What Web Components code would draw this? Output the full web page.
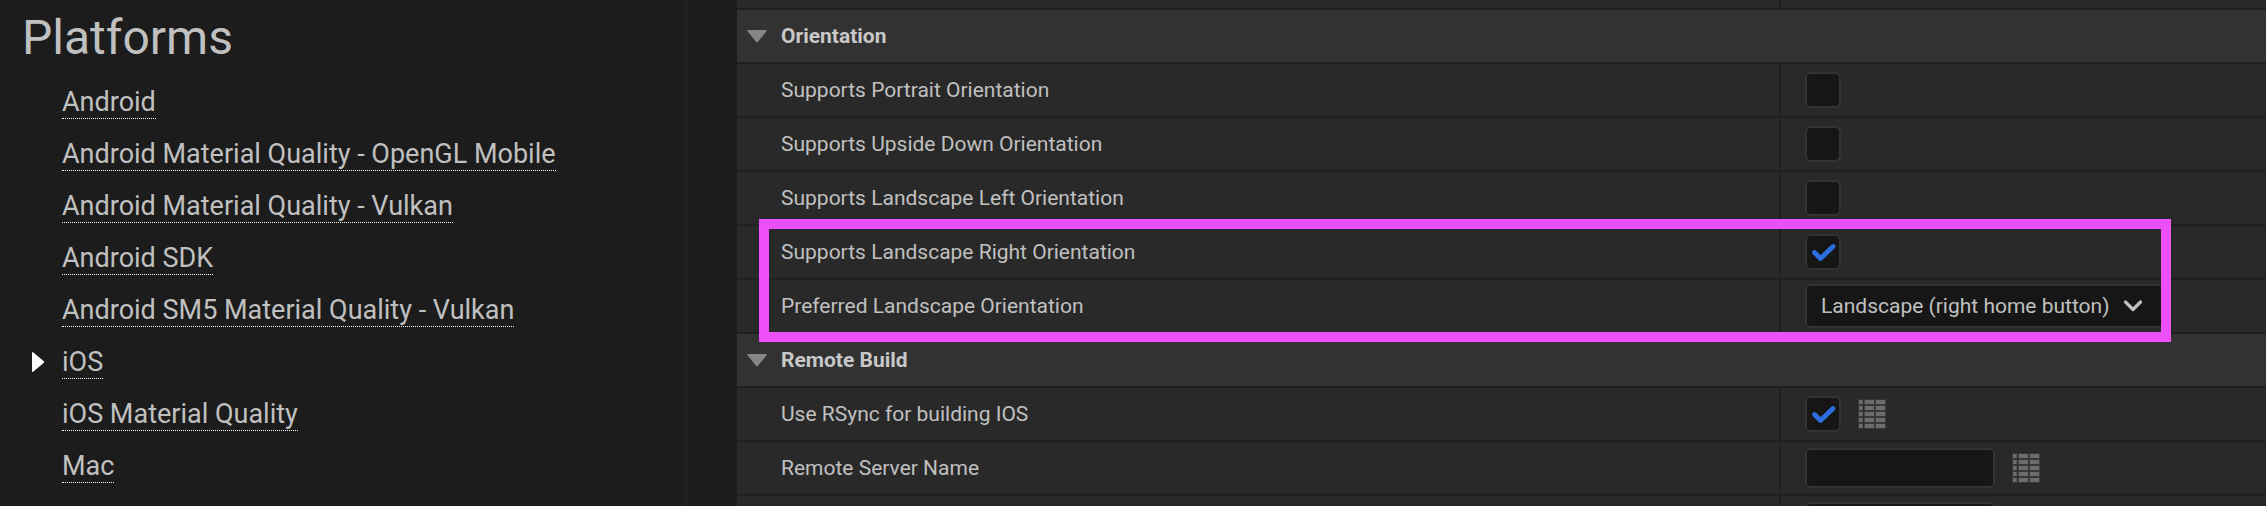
<!DOCTYPE html>
<html lang="en">
<head>
  <meta charset="UTF-8">
  <meta name="viewport" content="width=device-width, initial-scale=1.0">
  <title>Project Settings - iOS</title>
  <style>
    body {
      margin: 0;
      background: #1c1c1c;
      color: #c0c0c0;
      font-family: Roboto, "Liberation Sans", sans-serif;
    }
  </style>
</head>
<body>
  <settings-page>
    <platform-nav slot="nav" heading="Platforms">
      <platform-link>Android</platform-link>
      <platform-link>Android Material Quality - OpenGL Mobile</platform-link>
      <platform-link>Android Material Quality - Vulkan</platform-link>
      <platform-link>Android SDK</platform-link>
      <platform-link>Android SM5 Material Quality - Vulkan</platform-link>
      <platform-link current>iOS</platform-link>
      <platform-link>iOS Material Quality</platform-link>
      <platform-link>Mac</platform-link>
    </platform-nav>

    <setting-row type="stub"></setting-row>
    <setting-group>
      <span slot="title">Orientation</span>
      <setting-row type="check">Supports Portrait Orientation</setting-row>
      <setting-row type="check">Supports Upside Down Orientation</setting-row>
      <setting-row type="check">Supports Landscape Left Orientation</setting-row>
      <highlight-frame>
        <setting-row type="check" checked>Supports Landscape Right Orientation</setting-row>
        <setting-row type="select" value="Landscape (right home button)">Preferred Landscape Orientation</setting-row>
      </highlight-frame>
    </setting-group>
    <setting-group>
      <span slot="title">Remote Build</span>
      <setting-row type="check" checked config>Use RSync for building IOS</setting-row>
      <setting-row type="text" config>Remote Server Name</setting-row>
      <setting-row type="text"></setting-row>
    </setting-group>
  </settings-page>

  <script>
    // Two panes: navigation on the left, settings on the right
    class SettingsPage extends HTMLElement {
      constructor() {
        super();
        this.attachShadow({ mode: 'open' }).innerHTML = `
          <style>
            :host {
              display: flex;
              height: 100vh;
              overflow: hidden;
            }
            aside {
              flex: 0 0 683px;
              border-right: 6px solid #202020;
            }
            main {
              flex: 1;
              min-width: 0;
              margin-left: 48px;
            }
          </style>
          <aside><slot name="nav"></slot></aside>
          <main><slot></slot></main>
        `;
      }
    }

    class PlatformNav extends HTMLElement {
      constructor() {
        super();
        this.attachShadow({ mode: 'open' }).innerHTML = `
          <style>
            :host {
              display: block;
              padding: 8px 22px;
            }
            h1 {
              margin: 0 0 8px;
              font-size: 48px;
              line-height: 60px;
              font-weight: 400;
            }
            nav {
              display: flex;
              flex-direction: column;
            }
          </style>
          <h1>${this.getAttribute('heading')}</h1>
          <nav><slot></slot></nav>
        `;
      }
    }

    class PlatformLink extends HTMLElement {
      constructor() {
        super();
        const arrow = '<svg width="14" height="22" viewBox="0 0 14 22"><path d="M1 2.2Q1 .2 2.4 1.5L12.6 10Q13.6 11 12.6 12L2.4 20.5Q1 21.800 1 19.800Z" fill="#fff"/></svg>';
        this.attachShadow({ mode: 'open' }).innerHTML = `
          <style>
            :host {
              display: grid;
              grid-template-columns: 14px 1fr;
              column-gap: 17px;
              padding-left: 9px;
              height: 52px;
              align-items: center;
              justify-items: start;
            }
            a {
              grid-column: 2;
              grid-row: 1;
              color: inherit;
              font-size: 27px;
              line-height: 32px;
              text-decoration: none;
              border-bottom: 1px dotted #fff;
            }
          </style>
          ${this.hasAttribute('current') ? arrow : ''}
          <a href="#"><slot></slot></a>
        `;
      }
    }

    class SettingGroup extends HTMLElement {
      constructor() {
        super();
        this.attachShadow({ mode: 'open' }).innerHTML = `
          <style>
            :host {
              display: block;
            }
            button {
              display: flex;
              align-items: center;
              gap: 14px;
              width: 100%;
              height: 54px;
              padding: 0 10px;
              border: 0;
              border-bottom: 2px solid #202020;
              background: #323232;
              color: #c8c8c8;
              font: 700 21px/24px Roboto, "Liberation Sans", sans-serif;
              text-align: left;
            }
          </style>
          <button type="button" aria-expanded="true">
            <svg width="20" height="14" viewBox="0 0 20 14"><path d="M1.300 1H18.700Q20.500 1 19.300 2.600L11 12.800Q10 14 9 12.800L.7 2.600Q-.5 1 1.300 1Z" fill="#868686"/></svg>
            <slot name="title"></slot>
          </button>
          <slot></slot>
        `;
      }
    }

    // One setting: name on the left, its control on the right
    class SettingRow extends HTMLElement {
      constructor() {
        super();
        this.attachShadow({ mode: 'open' }).innerHTML = `
          <style>
            :host {
              display: grid;
              grid-template-columns: minmax(0, 1fr) 487px;
              height: 52px;
              border-bottom: 2px solid #202020;
              background: #292929;
              font-size: 21px;
              line-height: 24px;
            }
            :host([type="stub"]) {
              height: 8px;
            }
            label {
              display: flex;
              align-items: center;
              padding-left: 44px;
            }
            .value {
              display: flex;
              align-items: center;
              gap: 17px;
              padding-left: 24px;
              border-left: 2px solid #202020;
            }
            .control {
              display: grid;
              align-items: center;
            }
            .control > * {
              grid-area: 1 / 1;
            }
            .control svg {
              pointer-events: none;
            }
            input, select {
              appearance: none;
              box-sizing: border-box;
              margin: 0;
              border: 2px solid #333;
              border-radius: 6px;
              background: #161616;
              color: inherit;
              font: inherit;
            }
            input[type="checkbox"] {
              width: 36px;
              height: 36px;
            }
            input[type="text"] {
              width: 190px;
              height: 40px;
              padding: 0 12px;
            }
            select {
              width: 360px;
              height: 44px;
              padding: 0 40px 0 14px;
            }
            .chevron {
              justify-self: end;
              margin-right: 22px;
            }
            .config {
              display: flex;
              padding: 0;
              border: 0;
              background: none;
            }
          </style>
          <label for="control"><slot></slot></label>
          <div class="value">${this.control()}${this.config()}</div>
        `;
      }

      control() {
        const checked = this.hasAttribute('checked');
        switch (this.getAttribute('type')) {
          case 'check':
            return `
              <span class="control">
                <input type="checkbox" id="control" ${checked ? 'checked' : ''}>
                ${checked ? '<svg width="36" height="36" viewBox="0 0 36 36"><path d="M9.500 18.500L15.500 24.500L28 12.500" fill="none" stroke="#2c6de0" stroke-width="4.800" stroke-linecap="round" stroke-linejoin="round"/></svg>' : ''}
              </span>`;
          case 'select':
            return `
              <span class="control">
                <select id="control"><option>${this.getAttribute('value')}</option></select>
                <svg class="chevron" width="20" height="14" viewBox="0 0 20 14"><path d="M2.500 3L10 10.500L17.500 3" fill="none" stroke="#c0c0c0" stroke-width="3.200" stroke-linecap="round" stroke-linejoin="round"/></svg>
              </span>`;
          case 'text':
            return '<input type="text" id="control">';
          default:
            return '';
        }
      }

      config() {
        if (!this.hasAttribute('config')) return '';
        const cells = [1, 7, 13, 19, 25].map(y => `
          <rect x="1" y="${y}" width="3.700" height="4"/>
          <rect x="6.700" y="${y}" width="9.300" height="4"/>
          <rect x="17.700" y="${y}" width="9.500" height="4"/>`).join('');
        return `
          <button class="config" type="button" aria-label="Config file">
            <svg width="28" height="30" viewBox="0 0 28 30" fill="#6c6c6c">
              <path d="M0 0H5.300V30H0ZM6 0H16.700V30H6ZM17.200 0H28V30H17.200Z" fill="#383838"/>
              ${cells}
            </svg>
          </button>`;
      }
    }

    // Outline drawn over the rows it wraps
    class HighlightFrame extends HTMLElement {
      constructor() {
        super();
        this.attachShadow({ mode: 'open' }).innerHTML = `
          <style>
            :host {
              display: block;
              position: relative;
            }
            .frame {
              position: absolute;
              inset: -7px 95px -8px 22px;
              border: 10px solid #ed50f8;
              pointer-events: none;
              z-index: 1;
            }
          </style>
          <slot></slot>
          <div class="frame"></div>
        `;
      }
    }

    customElements.define('settings-page', SettingsPage);
    customElements.define('platform-nav', PlatformNav);
    customElements.define('platform-link', PlatformLink);
    customElements.define('setting-group', SettingGroup);
    customElements.define('setting-row', SettingRow);
    customElements.define('highlight-frame', HighlightFrame);
  </script>
</body>
</html>
